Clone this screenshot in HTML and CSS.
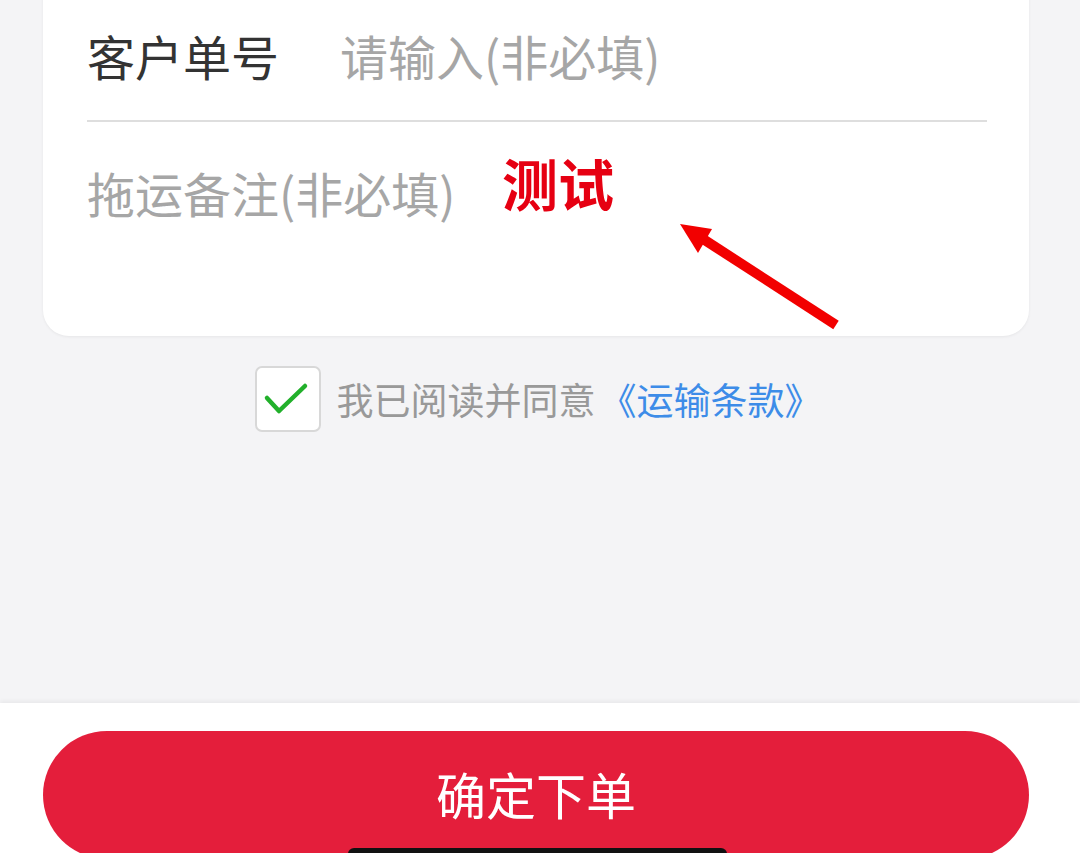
FILE: index.html
```
<!DOCTYPE html>
<html lang="zh">
<head>
    <meta charset="UTF-8">
    <meta name="viewport" content="width=device-width, initial-scale=1.0">
    <title>确定下单</title>
    <link rel="stylesheet" href="styles.css">
</head>
<body>
<div class="page">
    <div class="main">
        <div class="card">
            <div class="row">
                <span class="label">客户单号</span>
                <span class="placeholder">请输入(非必填)</span>
            </div>
            <div class="divider"></div>
            <div class="remark">
                <span class="placeholder">拖运备注(非必填)</span>
            </div>
        </div>

        <div class="agree">
            <span class="checkbox">
                <svg width="66" height="66" viewBox="0 0 66 66">
                    <polyline points="12,32 24,45 50,20" fill="none" stroke="#22b02b" stroke-width="4.5" stroke-linecap="round" stroke-linejoin="round"/>
                </svg>
            </span>
            <span class="agree-text">我已阅读并同意</span>
            <a class="terms">《运输条款》</a>
        </div>
    </div>

    <footer class="footer">
        <button class="submit">确定下单</button>
    </footer>

    <!-- annotations drawn over the screenshot -->
    <div class="note">测试</div>
    <svg class="arrow" width="180" height="120" viewBox="0 0 180 120">
        <line x1="30" y1="22" x2="166" y2="110" stroke="#f20000" stroke-width="10"/>
        <polygon points="10,9 42,14 28,38" fill="#f20000"/>
    </svg>
    <div class="home-bar"></div>
</div>
</body>
</html>
```

FILE: styles.css
```
body {
    margin: 0;
    padding: 0;
    font-family: "Noto Sans CJK SC", "Noto Sans", sans-serif;
    background-color: #f4f4f6;
}

.page {
    position: relative;
    height: 853px;
    overflow: hidden;
    display: flex;
    flex-direction: column;
}

.main {
    flex: 1;
    padding: 0 51px 0 43px;
}

.card {
    background-color: #ffffff;
    border-radius: 26px;
    margin-top: -30px;
    height: 366px;
    box-shadow: 0 1px 3px rgba(0, 0, 0, 0.06);
}

.row {
    display: flex;
    align-items: center;
    height: 150px;
    padding: 20px 44px 0;
    box-sizing: border-box;
}

.label {
    font-size: 48px;
    color: #333333;
    width: 253px;
}

.placeholder {
    font-size: 48px;
    color: #a6a6a6;
}

.divider {
    height: 2px;
    background-color: #dedede;
    margin: 0 42px 0 44px;
}

.remark {
    padding: 37px 44px 0;
    line-height: 66px;
}

.agree {
    display: flex;
    align-items: center;
    justify-content: center;
    margin-top: 30px;
    padding-left: 4px;
}

.checkbox {
    width: 66px;
    height: 66px;
    box-sizing: border-box;
    border: 2px solid #d8d8d8;
    border-radius: 7px;
    background-color: #ffffff;
    margin-right: 16px;
    display: flex;
}

.checkbox svg {
    margin: -2px;
}

.agree-text {
    font-size: 37px;
    color: #999999;
    margin-right: 4px;
}

.terms {
    font-size: 37px;
    color: #3d8ce8;
}

.footer {
    height: 150px;
    flex-shrink: 0;
    box-sizing: border-box;
    background-color: #ffffff;
    box-shadow: 0 -2px 4px rgba(0, 0, 0, 0.05);
    padding: 28px 51px 0 43px;
}

.submit {
    width: 100%;
    height: 128px;
    border: none;
    border-radius: 64px;
    background-color: #e41e3b;
    color: #ffffff;
    font-family: "Noto Sans CJK SC", sans-serif;
    font-size: 50px;
    padding: 0 0 4px;
}

.note {
    position: absolute;
    left: 502px;
    top: 152px;
    font-size: 56px;
    line-height: 60px;
    font-weight: bold;
    color: #e60012;
}

.arrow {
    position: absolute;
    left: 670px;
    top: 215px;
}

.home-bar {
    position: absolute;
    left: 348px;
    top: 848px;
    width: 379px;
    height: 12px;
    border-radius: 6px;
    background-color: #111111;
}
```
